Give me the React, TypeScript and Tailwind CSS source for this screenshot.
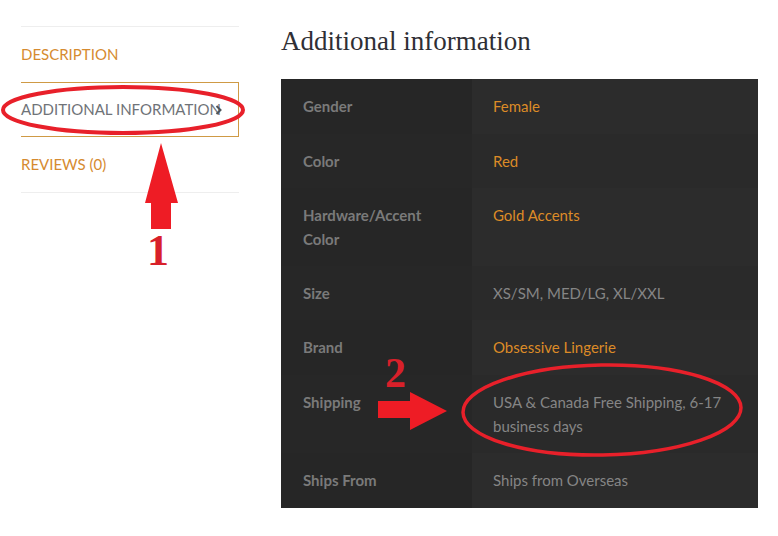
type Row = { label: string; value: string; link?: boolean; h: string };

const rows: Row[] = [
  { label: "Gender", value: "Female", link: true, h: "h-[55px]" },
  { label: "Color", value: "Red", link: true, h: "h-[54px]" },
  { label: "Hardware/Accent Color", value: "Gold Accents", link: true, h: "h-[78px]" },
  { label: "Size", value: "XS/SM, MED/LG, XL/XXL", h: "h-[54px]" },
  { label: "Brand", value: "Obsessive Lingerie", link: true, h: "h-[55px]" },
  { label: "Shipping", value: "USA & Canada Free Shipping, 6-17 business days", h: "h-[78px]" },
  { label: "Ships From", value: "Ships from Overseas", h: "h-[55px]" },
];

const tabs = [
  { name: "DESCRIPTION", active: false },
  { name: "ADDITIONAL INFORMATION", active: true },
  { name: "REVIEWS (0)", active: false },
];

export default function App() {
  return (
    <div className="relative w-[778px] h-[536px] bg-white overflow-hidden font-['Lato','Liberation_Sans',sans-serif]">
      <div className="flex">
        {/* tabs */}
        <div className="ml-[21px] w-[218px] pt-[26px]">
          <ul className="border-t border-[#eeeeee] border-b">
            {tabs.map((t) => (
              <li
                key={t.name}
                className={`relative h-[55px] flex items-center text-[15px] ${
                  t.active ? "border-y border-r border-[#cf9a45] text-[#6f7378]" : "text-[#d68b30]"
                }`}
              >
                <span>{t.name}</span>
                {t.active && (
                  <svg className="absolute left-[194px] top-[22px]" width="7" height="10" viewBox="0 0 7 10">
                    <path d="M1.5 1 L5.5 5 L1.5 9" fill="none" stroke="#4f545a" strokeWidth="2" />
                  </svg>
                )}
              </li>
            ))}
          </ul>
        </div>

        {/* content */}
        <div className="ml-[42px] w-[477px]">
          <h2 className="pt-[25px] h-[79px] text-[27px] leading-[32px] text-[#2f2f35] font-['Liberation_Serif','DejaVu_Serif',serif]">
            Additional information
          </h2>
          <table className="w-full border-collapse text-[15px] leading-[24px]">
            <tbody>
              {rows.map((r, i) => (
                <tr key={r.label} className={r.h}>
                  <th
                    className={`w-[191px] text-left align-top pl-[22px] pr-4 pt-[15px] pb-0 font-bold text-[#7a7a7a] ${
                      i % 2 === 0 ? "bg-[#262626]" : "bg-[#272727]"
                    }`}
                  >
                    {r.label}
                  </th>
                  <td
                    className={`align-top pl-[21px] pr-4 pt-[15px] pb-0 ${
                      i % 2 === 0 ? "bg-[#2c2c2c]" : "bg-[#2a2a2a]"
                    } ${r.link ? "text-[#dc8b27]" : "text-[#858585]"}`}
                  >
                    {r.value}
                  </td>
                </tr>
              ))}
            </tbody>
          </table>
        </div>
      </div>

      {/* red annotations */}
      <svg className="absolute inset-0 pointer-events-none" width="778" height="536" viewBox="0 0 778 536">
        <ellipse cx="123" cy="110" rx="120" ry="23" fill="none" stroke="#e8202a" strokeWidth="4" />
        <polygon points="161,143 178,203 171,203 171,229 151,229 151,203 145,203" fill="#ee1c25" />
        <ellipse cx="602" cy="410" rx="139" ry="45" fill="none" stroke="#e8202a" strokeWidth="3.5" transform="rotate(-1 602 410)" />
        <polygon points="378,401 410,401 410,392 447,411 410,430 410,418 378,418" fill="#ee1c25" />
      </svg>
      <span className="absolute left-[147px] top-[229px] text-[44px] leading-none font-bold text-[#d8202a] font-['Liberation_Serif',serif]">
        1
      </span>
      <span className="absolute left-[385px] top-[352px] text-[42px] leading-none font-bold text-[#d8202a] font-['Liberation_Serif',serif]">
        2
      </span>
    </div>
  );
}
